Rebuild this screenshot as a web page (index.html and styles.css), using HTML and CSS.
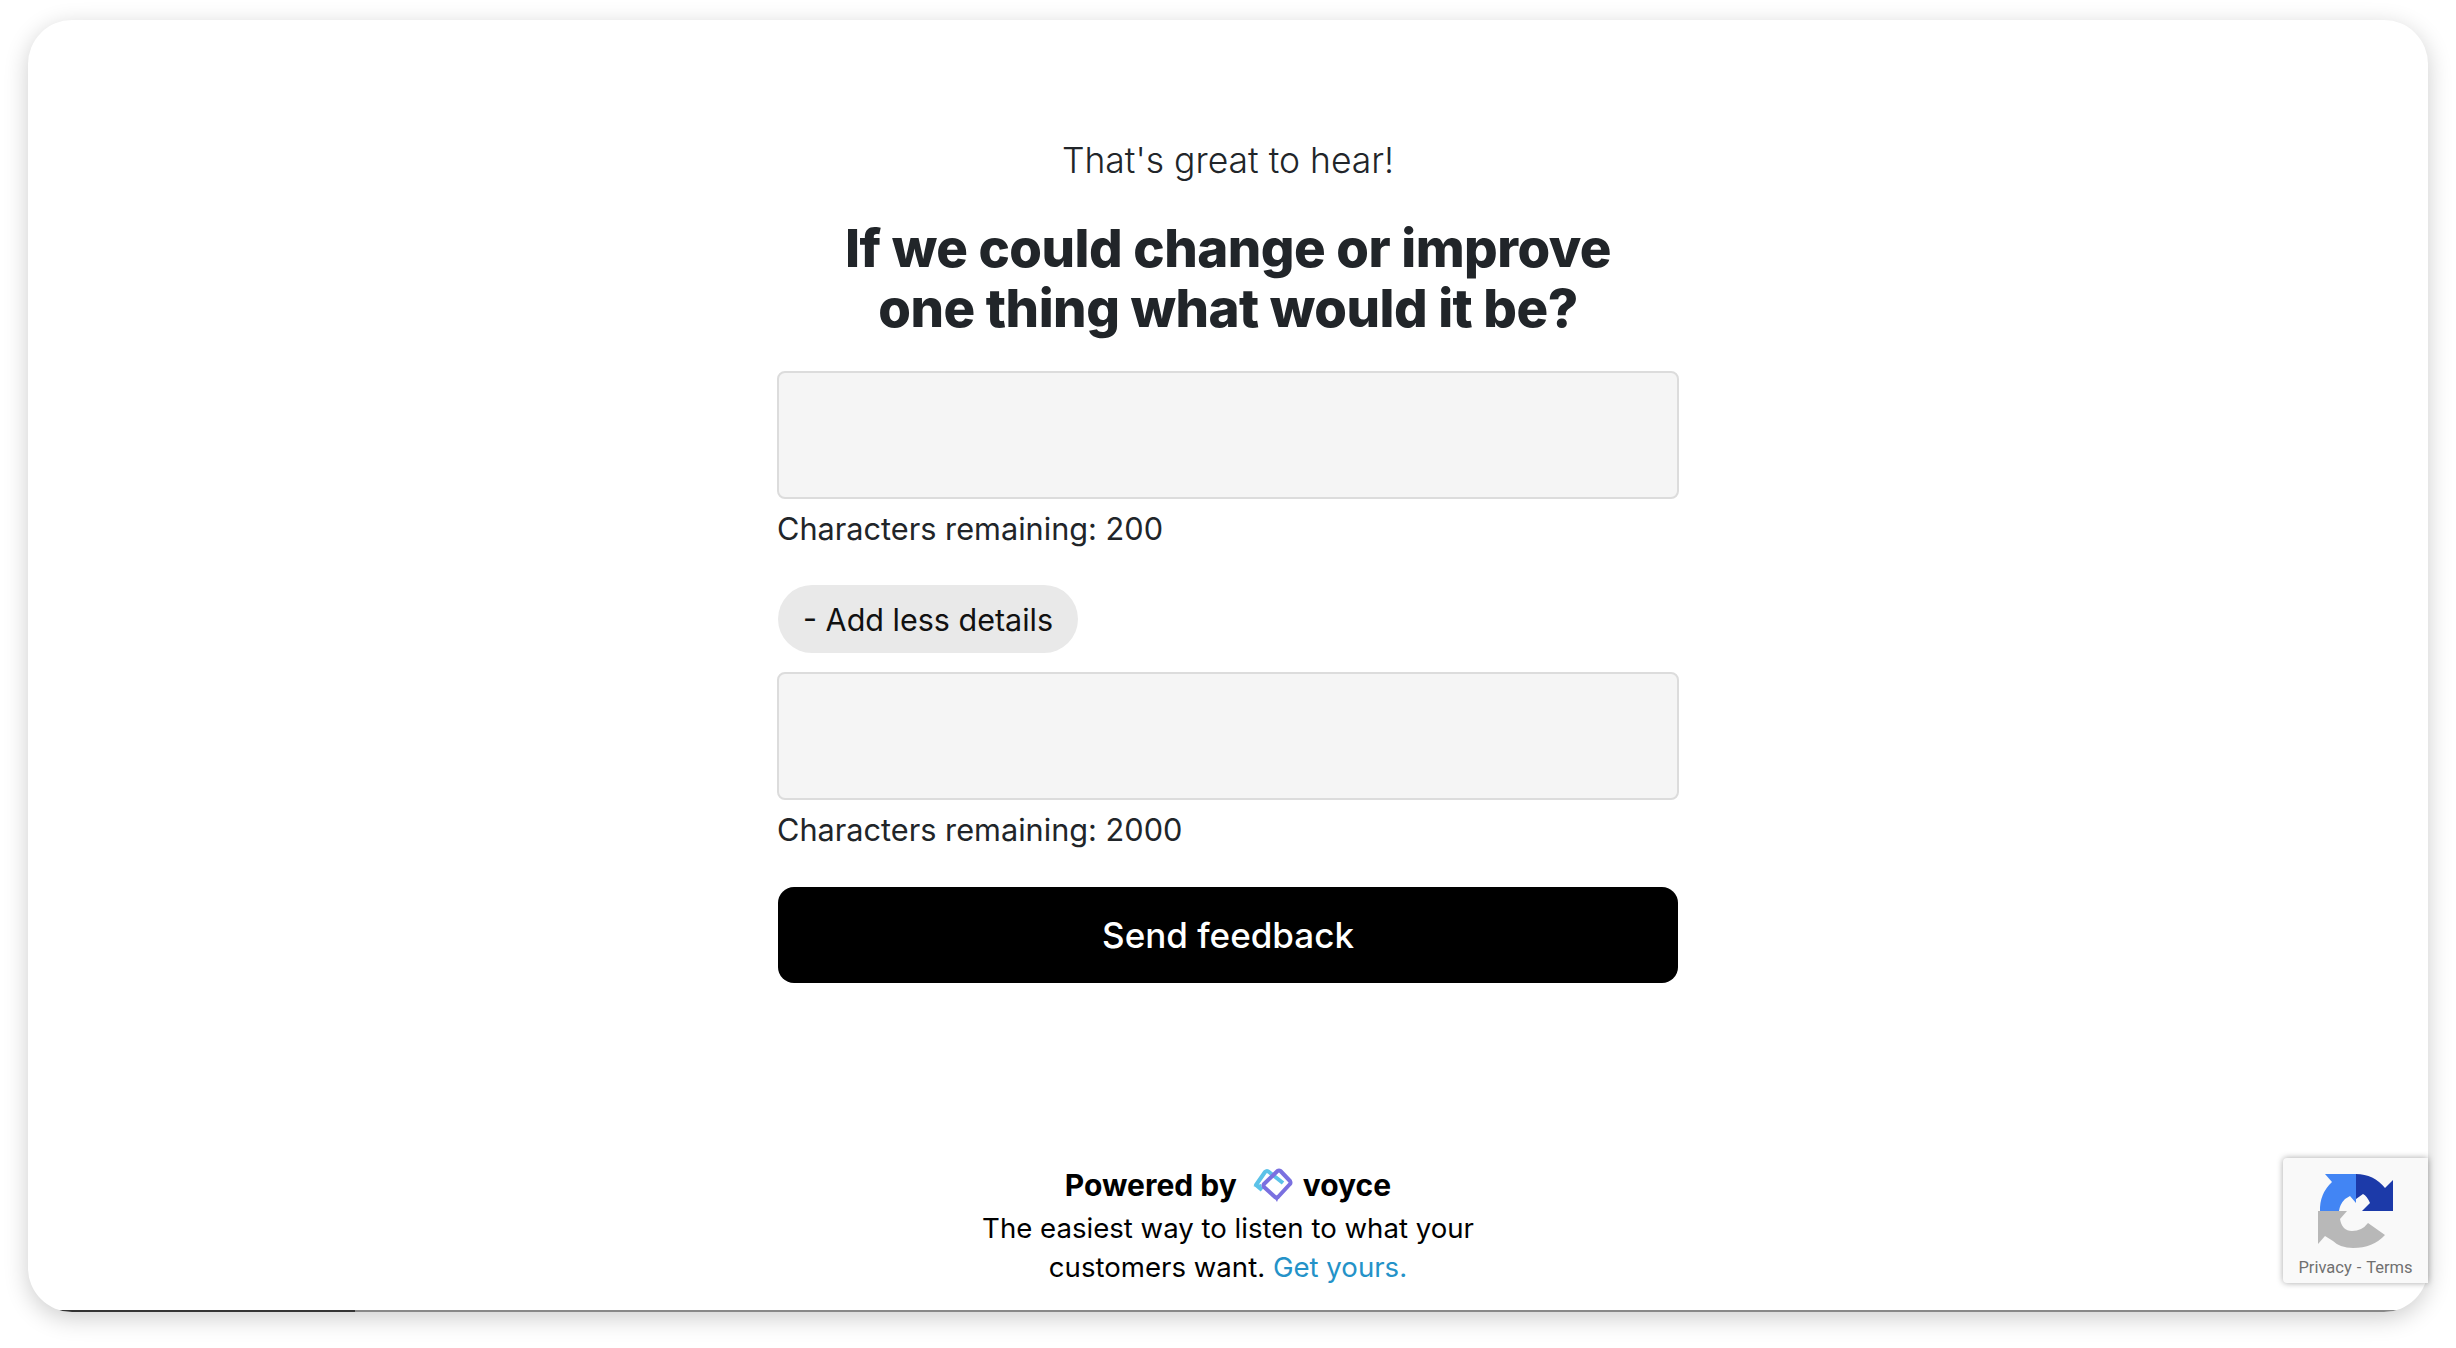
FILE: index.html
```html
<!DOCTYPE html>
<html lang="en">
<head>
<meta charset="utf-8">
<title>Voyce feedback</title>
<link rel="stylesheet" href="styles.css">
</head>
<body>
<main class="card">
  <section class="form">
    <p class="intro">That's great to hear!</p>
    <h1 class="question">If we could change or improve<br>one thing what would it be?</h1>
    <textarea class="field"></textarea>
    <p class="count">Characters remaining: 200</p>
    <button class="toggle" type="button">- Add less details</button>
    <textarea class="field"></textarea>
    <p class="count">Characters remaining: 2000</p>
    <button class="send" type="button">Send feedback</button>
  </section>
  <footer class="foot">
    <div class="powered">
      <span>Powered by</span>
      <svg class="logo" viewBox="0 0 40 34" width="40" height="34" aria-hidden="true">
        <path d="M9 22 L3 17 L12 4 Q14 2 16 4 L30 15" fill="none" stroke="#5cc2e8" stroke-width="4" stroke-linejoin="round"/>
        <path d="M0 18 L8 16 L9 20 Z" fill="#5cc2e8"/>
        <path d="M24.5 3 Q26 2 27.5 3 L37 13 Q38 15 37 16 L25 29 Q23.500 30 22 29 L11 19 Q10 17 11 16 Z" fill="none" stroke="#7a70e0" stroke-width="4" stroke-linejoin="round"/>
        <path d="M21 29 L26 29 L24 34 Z" fill="#7a70e0"/>
      </svg>
      <span>voyce</span>
    </div>
    <p class="tag">The easiest way to listen to what your<br>customers want. <a href="#">Get yours.</a></p>
  </footer>
  <div class="bar"></div>
</main>
<aside class="captcha">
  <svg class="cap-icon" viewBox="8 13 75 75" width="75" height="75" aria-hidden="true">
    <path d="M15 13 L46 13 L46 42 L40 35 L35 38 Q30 43 29 50 L10 50 A38 38 0 0 1 22 21 Z" fill="#4285f4"/>
    <path d="M46 13 A38 38 0 0 1 75 27 L83 19 L83 50 L52 50 L60 42 Q57 35 53 33 L46 38 Z" fill="#1c3aa9"/>
    <path d="M8 50 L37 50 L30 58 Q32 70 42 70 Q52 70 58 62 L75 74 Q63 87 43 87 Q30 87 23 80 L15 75 L8 83 Z" fill="#b8b8b8"/>
  </svg>
  <div class="cap-text">Privacy - Terms</div>
</aside>
</body>
</html>
```
FILE: styles.css
```css
* { box-sizing: border-box; }
html, body { margin: 0; height: 100%; background: #fff; overflow: hidden; }
body { font-family: Inter, "Liberation Sans", sans-serif; color: #212529; padding: 20px 28px 36px; }
.card {
  position: relative;
  height: 1292px;
  background: #fff;
  border-radius: 44px;
  box-shadow: 0 6px 24px rgba(0,0,0,.2);
  display: flex;
  flex-direction: column;
  align-items: center;
  overflow: hidden;
}
.form { width: 902px; margin-top: 119px; display: flex; flex-direction: column; align-items: stretch; }
.intro { margin: 0; font-size: 35.5px; line-height: 44px; text-align: center; font-weight: 300; }
.question { margin: 35px 0 0; font-size: 52.8px; line-height: 60px; font-weight: 800; text-align: center; letter-spacing: -.5px; }
.field { display: block; width: 100%; height: 128px; margin: 33px 0 0; background: #f5f5f5; border: 2px solid #dcdcdc; border-radius: 8px; resize: none; }
.count { margin: 7px 0 0; font-size: 30.7px; line-height: 46px; }
.toggle { align-self: flex-start; margin: 33px 0 0 1px; height: 68px; padding: 0 25px; background: #e9e9e9; border: 0; border-radius: 34px; font: inherit; font-size: 30.5px; color: #111; }
.toggle + .field { margin-top: 19px; }
.send { margin: 34px 1px 0; height: 96px; background: #000; color: #fff; border: 0; border-radius: 16px; font: inherit; font-size: 35px; font-weight: 500; }
.foot { margin-top: auto; padding-bottom: 25px; text-align: center; color: #000; }
.powered { display: flex; align-items: center; justify-content: center; gap: 16px; margin-bottom: 4px; font-size: 30px; line-height: 40px; font-weight: 700; }
.logo { display: block; margin-right: -6px; }
.tag { margin: 0; font-size: 27.6px; line-height: 39px; }
.tag a { color: #2492c8; text-decoration: none; }
.bar { position: absolute; left: 0; right: 0; bottom: 0; height: 2px; background: linear-gradient(90deg, #333 0 327px, #888 327px); }
.captcha { position: absolute; left: 2283px; top: 1158px; width: 145px; height: 125px; background: #f9f9f9; border-radius: 4px 0 0 4px; box-shadow: 0 0 6px rgba(0,0,0,.35); display: flex; flex-direction: column; align-items: center; }
.cap-icon { display: block; margin-top: 16px; }
.cap-text { margin-top: 10px; font-family: Roboto, sans-serif; font-size: 16.5px; line-height: 18px; color: #707070; white-space: nowrap; word-spacing: 1px; }
```
